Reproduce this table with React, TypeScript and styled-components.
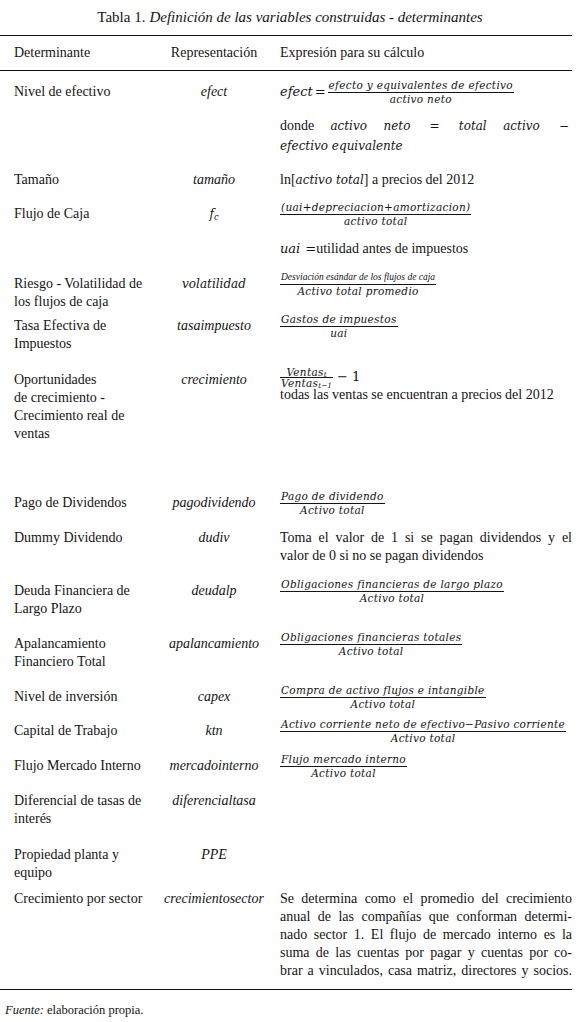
import React, { ReactNode } from "react";
import styled, { createGlobalStyle } from "styled-components";

const GlobalStyle = createGlobalStyle`
  html, body {
    margin: 0;
    padding: 0;
    background: #fff;
  }
  body {
    font-family: "Liberation Serif", "Times New Roman", serif;
    color: #141414;
  }
`;

const Page = styled.div`
  width: 580px;
`;

const Caption = styled.h1`
  margin: 0;
  height: 35px;
  display: flex;
  align-items: center;
  justify-content: center;
  font-size: 15px;
  font-weight: normal;
  em {
    margin-left: 4px;
  }
`;

const Table = styled.div`
  width: 572px;
  border-top: 1.5px solid #111;
  border-bottom: 1.5px solid #111;
`;

const Head = styled.div`
  display: grid;
  grid-template-columns: 146px 108px 1fr;
  align-items: center;
  height: 34px;
  padding-left: 14px;
  border-bottom: 1px solid #111;
  font-size: 14px;
  white-space: nowrap;
`;

const HeadCenter = styled.div`
  text-align: center;
`;

const HeadExpr = styled.div`
  padding-left: 12px;
`;

const Body = styled.div`
  padding: 12px 0 9px;
`;

const Row = styled.div<{ $h: number }>`
  display: grid;
  grid-template-columns: 146px 108px 1fr;
  align-items: start;
  height: ${(p) => p.$h}px;
  padding-left: 14px;
  font-size: 14px;
  line-height: 18px;
`;

const Name = styled.div`
  white-space: nowrap;
`;

const Symbol = styled.div<{ $math?: boolean }>`
  text-align: center;
  font-style: italic;
  font-family: ${(p) => (p.$math ? '"DejaVu Serif", serif' : '"Liberation Serif", serif')};
  font-size: ${(p) => (p.$math ? 12 : 14)}px;
`;

const Expr = styled.div<{ $gap?: number }>`
  display: flex;
  flex-direction: column;
  gap: ${(p) => p.$gap ?? 0}px;
  padding-left: 12px;
`;

const Line = styled.div<{ $lh?: number }>`
  height: ${(p) => p.$lh ?? 18}px;
  display: flex;
  align-items: center;
  white-space: nowrap;
`;

const Para = styled.div<{ $lh?: number }>`
  line-height: ${(p) => p.$lh ?? 18}px;
`;

const JLine = styled.span<{ $last?: boolean }>`
  display: block;
  text-align: justify;
  text-align-last: ${(p) => (p.$last ? "left" : "justify")};
  white-space: nowrap;
`;

const M = styled.span<{ $size?: number }>`
  font-family: "DejaVu Serif", serif;
  font-style: italic;
  font-size: ${(p) => p.$size ?? 12}px;
`;

const Op = styled.span<{ $size?: number; $l?: number; $r?: number }>`
  font-family: "DejaVu Serif", serif;
  font-style: normal;
  font-size: ${(p) => p.$size ?? 12}px;
  margin: 0 ${(p) => p.$r ?? 3}px 0 ${(p) => p.$l ?? 3}px;
`;

const Sub = styled.sub<{ $drop?: number }>`
  font-size: 70%;
  line-height: 0;
  vertical-align: ${(p) => p.$drop ?? -0.25}em;
  letter-spacing: 0;
`;

const FracBox = styled.span<{ $size?: number; $lh?: number }>`
  display: inline-flex;
  flex-direction: column;
  align-items: stretch;
  text-align: center;
  font-family: "DejaVu Serif", serif;
  font-style: italic;
  font-size: ${(p) => p.$size ?? 10.5}px;
  letter-spacing: 0.3px;
  line-height: ${(p) => p.$lh ?? 11}px;
  white-space: nowrap;
`;

const Numer = styled.span`
  padding: 0 1px 1px;
  border-bottom: 1px solid #141414;
`;

const Denom = styled.span`
  padding: 1px 1px 0;
`;

const TinyText = styled.span`
  font-family: "Liberation Serif", serif;
  font-style: italic;
  font-size: 9.5px;
  letter-spacing: 0;
`;

const Note = styled.p`
  margin: 0;
  padding: 11px 0 0 5px;
  font-size: 12.5px;
  line-height: 18px;
`;

const Frac = ({ n, d, size, lh }: { n: ReactNode; d: ReactNode; size?: number; lh?: number }) => (
  <FracBox $size={size} $lh={lh}>
    <Numer>{n}</Numer>
    <Denom>{d}</Denom>
  </FracBox>
);

type RowData = {
  name: string[];
  symbol: ReactNode;
  math?: boolean;
  expr?: ReactNode;
  h: number;
};

const rows: RowData[] = [
  {
    name: ["Nivel de efectivo"],
    symbol: "efect",
    h: 88,
    expr: (
      <Expr $gap={15}>
        <Line>
          <M $size={13}>efect</M>
          <Op $size={13} $l={2} $r={2}>=</Op>
          <Frac n="efecto y equivalentes de efectivo" d="activo neto" />
        </Line>
        <Para $lh={20}>
          <JLine>
            donde <M>activo neto</M> <Op>=</Op> <M>total activo</M> <Op>−</Op>
          </JLine>
          <JLine $last>
            <M>efectivo equivalente</M>
          </JLine>
        </Para>
      </Expr>
    ),
  },
  {
    name: ["Tamaño"],
    symbol: "tamaño",
    h: 34,
    expr: (
      <Expr>
        <Line>
          ln[<M>activo total</M>] a precios del 2012
        </Line>
      </Expr>
    ),
  },
  {
    name: ["Flujo de Caja"],
    symbol: (
      <M>
        f<Sub>c</Sub>
      </M>
    ),
    math: true,
    h: 70,
    expr: (
      <Expr $gap={17}>
        <Line>
          <Frac n="(uai+depreciacion+amortizacion)" d="activo total" />
        </Line>
        <Line>
          <M $size={13}>uai</M>
          <Op $size={13} $l={5} $r={0}>=</Op>utilidad antes de impuestos
        </Line>
      </Expr>
    ),
  },
  {
    name: ["Riesgo - Volatilidad de", "los flujos de caja"],
    symbol: "volatilidad",
    math: true,
    h: 42,
    expr: (
      <Expr>
        <Line>
          <Frac n={<TinyText>Desviación esándar de los flujos de caja</TinyText>} d="Activo total promedio" />
        </Line>
      </Expr>
    ),
  },
  {
    name: ["Tasa Efectiva de", "Impuestos"],
    symbol: "tasaimpuesto",
    h: 54,
    expr: (
      <Expr>
        <Line>
          <Frac n="Gastos de impuestos" d="uai" />
        </Line>
      </Expr>
    ),
  },
  {
    name: ["Oportunidades", "de crecimiento -", "Crecimiento real de", "ventas"],
    symbol: "crecimiento",
    h: 123,
    expr: (
      <Expr>
        <Line $lh={12}>
          <Frac
            lh={8}
            n={
              <>
                Ventas<Sub $drop={-0.15}>t</Sub>
              </>
            }
            d={
              <>
                Ventas<Sub $drop={-0.1}>t−1</Sub>
              </>
            }
          />
          <Op $size={13} $l={4} $r={4}>−</Op>
          <Op $size={13} $l={0} $r={0}>1</Op>
        </Line>
        <Line $lh={24}>todas las ventas se encuentran a precios del 2012</Line>
      </Expr>
    ),
  },
  {
    name: ["Pago de Dividendos"],
    symbol: "pagodividendo",
    h: 35,
    expr: (
      <Expr>
        <Line>
          <Frac n="Pago de dividendo" d="Activo total" />
        </Line>
      </Expr>
    ),
  },
  {
    name: ["Dummy Dividendo"],
    symbol: "dudiv",
    h: 53,
    expr: (
      <Expr>
        <Para>
          <JLine>Toma el valor de 1 si se pagan dividendos y el</JLine>
          <JLine $last>valor de 0 si no se pagan dividendos</JLine>
        </Para>
      </Expr>
    ),
  },
  {
    name: ["Deuda Financiera de", "Largo Plazo"],
    symbol: "deudalp",
    h: 53,
    expr: (
      <Expr>
        <Line>
          <Frac n="Obligaciones financieras de largo plazo" d="Activo total" />
        </Line>
      </Expr>
    ),
  },
  {
    name: ["Apalancamiento", "Financiero Total"],
    symbol: "apalancamiento",
    h: 53,
    expr: (
      <Expr>
        <Line>
          <Frac n="Obligaciones financieras totales" d="Activo total" />
        </Line>
      </Expr>
    ),
  },
  {
    name: ["Nivel de inversión"],
    symbol: "capex",
    h: 34,
    expr: (
      <Expr>
        <Line>
          <Frac n="Compra de activo flujos e intangible" d="Activo total" />
        </Line>
      </Expr>
    ),
  },
  {
    name: ["Capital de Trabajo"],
    symbol: "ktn",
    h: 35,
    expr: (
      <Expr>
        <Line>
          <Frac n="Activo corriente neto de efectivo−Pasivo corriente" d="Activo total" />
        </Line>
      </Expr>
    ),
  },
  {
    name: ["Flujo Mercado Interno"],
    symbol: "mercadointerno",
    h: 35,
    expr: (
      <Expr>
        <Line>
          <Frac n="Flujo mercado interno" d="Activo total" />
        </Line>
      </Expr>
    ),
  },
  {
    name: ["Diferencial de tasas de", "interés"],
    symbol: "diferencialtasa",
    h: 54,
  },
  {
    name: ["Propiedad planta y", "equipo"],
    symbol: "PPE",
    h: 44,
  },
  {
    name: ["Crecimiento por sector"],
    symbol: "crecimientosector",
    h: 90,
    expr: (
      <Expr>
        <Para>
          <JLine>Se determina como el promedio del crecimiento</JLine>
          <JLine>anual de las compañías que conforman determi-</JLine>
          <JLine>nado sector 1. El flujo de mercado interno es la</JLine>
          <JLine>suma de las cuentas por pagar y cuentas por co-</JLine>
          <JLine>brar a vinculados, casa matriz, directores y socios.</JLine>
        </Para>
      </Expr>
    ),
  },
];

export default function App() {
  return (
    <Page>
      <GlobalStyle />
      <Caption>
        Tabla 1.<em>Definición de las variables construidas - determinantes</em>
      </Caption>
      <Table>
        <Head>
          <div>Determinante</div>
          <HeadCenter>Representación</HeadCenter>
          <HeadExpr>Expresión para su cálculo</HeadExpr>
        </Head>
        <Body>
          {rows.map((r, i) => (
            <Row key={i} $h={r.h}>
              <Name>
                {r.name.map((l, j) => (
                  <div key={j}>{l}</div>
                ))}
              </Name>
              <Symbol $math={r.math}>{r.symbol}</Symbol>
              {r.expr ?? <div />}
            </Row>
          ))}
        </Body>
      </Table>
      <Note>
        <em>Fuente:</em> elaboración propia.
      </Note>
    </Page>
  );
}
